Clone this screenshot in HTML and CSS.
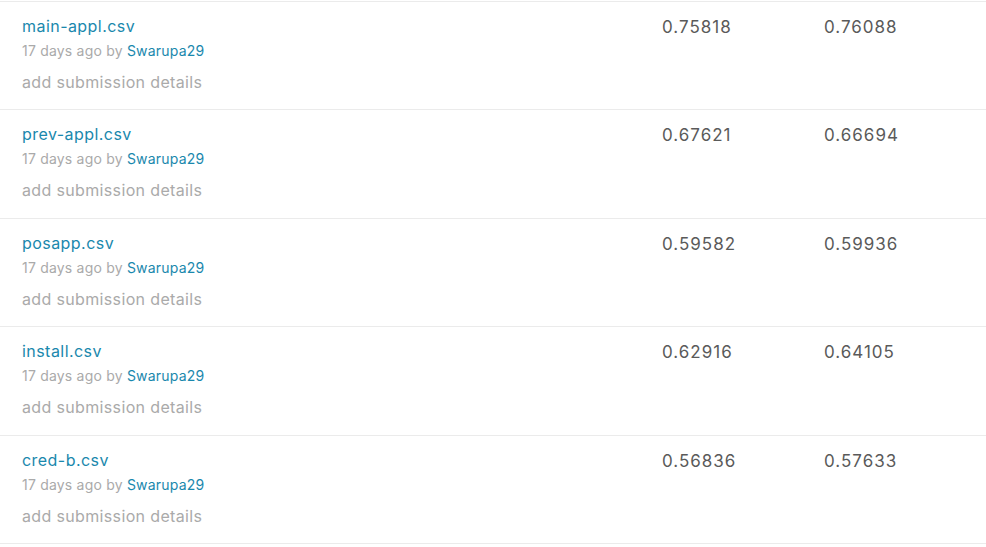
FILE: index.html
```html
<!DOCTYPE html>
<html>
<head>
<meta charset="utf-8">
<link rel="stylesheet" href="styles.css">
</head>
<body>
<div class="list">
  <div class="row">
    <div class="info">
      <a class="name">main-appl.csv</a>
      <div class="meta">17 days ago by <a class="user">Swarupa29</a></div>
      <div class="details">add submission details</div>
    </div>
    <div class="score">0.75818</div>
    <div class="score">0.76088</div>
  </div>
  <div class="row">
    <div class="info">
      <a class="name">prev-appl.csv</a>
      <div class="meta">17 days ago by <a class="user">Swarupa29</a></div>
      <div class="details">add submission details</div>
    </div>
    <div class="score">0.67621</div>
    <div class="score">0.66694</div>
  </div>
  <div class="row">
    <div class="info">
      <a class="name">posapp.csv</a>
      <div class="meta">17 days ago by <a class="user">Swarupa29</a></div>
      <div class="details">add submission details</div>
    </div>
    <div class="score">0.59582</div>
    <div class="score">0.59936</div>
  </div>
  <div class="row">
    <div class="info">
      <a class="name">install.csv</a>
      <div class="meta">17 days ago by <a class="user">Swarupa29</a></div>
      <div class="details">add submission details</div>
    </div>
    <div class="score">0.62916</div>
    <div class="score">0.64105</div>
  </div>
  <div class="row">
    <div class="info">
      <a class="name">cred-b.csv</a>
      <div class="meta">17 days ago by <a class="user">Swarupa29</a></div>
      <div class="details">add submission details</div>
    </div>
    <div class="score">0.56836</div>
    <div class="score">0.57633</div>
  </div>
</div>
</body>
</html>
```
FILE: styles.css
```css
html, body {
  margin: 0;
  padding: 0;
  background: #fff;
}
body {
  font-family: Inter, "Noto Sans", sans-serif;
  padding-top: 1px;
}
.list {
  display: flex;
  flex-direction: column;
}
.row {
  display: flex;
  border-top: 1px solid #ebebeb;
  height: 107.4px;
  padding-left: 22px;
}
.row:last-child {
  border-bottom: 1px solid #ebebeb;
}
.info {
  width: 640px;
  display: flex;
  flex-direction: column;
  padding-top: 13px;
}
.name {
  font-size: 16px;
  line-height: 22px;
  letter-spacing: 0.45px;
  color: #1a88ad;
}
.meta {
  font-size: 14px;
  line-height: 18px;
  letter-spacing: 0.2px;
  margin-top: 5px;
  color: #aaaaaa;
}
.user {
  color: #1a88ad;
}
.details {
  font-size: 16px;
  line-height: 22px;
  letter-spacing: 0.35px;
  margin-top: 11px;
  color: #aaaaaa;
}
.score {
  width: 162px;
  padding-top: 14px;
  font-size: 17px;
  line-height: 22px;
  letter-spacing: 1px;
  color: #5a5a5a;
}
```
